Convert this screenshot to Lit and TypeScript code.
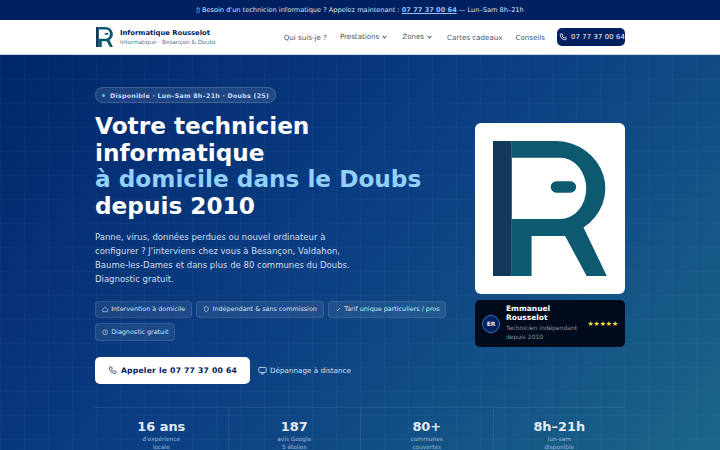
import { LitElement, html, css, svg } from "lit";
import { customElement } from "lit/decorators.js";

const phone = svg`<path d="M5 2h3l1.500 4-2 1.500a11 11 0 0 0 5 5l1.500-2 4 1.500v3a2 2 0 0 1-2 2A14 14 0 0 1 3 4a2 2 0 0 1 2-2z"/>`;
const logo = (w: number) => html`<svg width=${w} viewBox="0 0 340 404" class="logo">
  <path fill="#0d5970" fill-rule="evenodd" d="M56 0H190A150 141.500 0 0 1 270 258L340 404H280L215 283H115V404H56ZM56 50V233H200A78 91.500 0 0 0 200 50Z" />
  <rect x="172" y="120" width="76" height="34" rx="17" fill="#0d5970" />
  <rect x="0" y="0" width="56" height="404" fill="#11395a" />
</svg>`;

@customElement("app-root")
export class AppRoot extends LitElement {
  static styles = css`
    :host { display: block; height: 450px; overflow: hidden; font-family: "DejaVu Sans", sans-serif; color: #fff; }
    * { box-sizing: border-box; }
    .top { height: 20px; background: #002060; color: #dbe7f7; font-size: 6.600px; display: flex; align-items: center; justify-content: center; white-space: pre; }
    .top a { color: #93c5fd; font-weight: 700; text-decoration: underline; }
    nav { height: 35px; background: #fff; border-bottom: 1px solid #cbd5e1; display: flex; align-items: center; justify-content: space-between; padding: 0 95px 0 96px; }
    .brand { display: flex; align-items: center; gap: 7px; }
    .brand b { display: block; font-size: 6.800px; line-height: 9px; color: #002060; }
    .brand small { display: block; font-size: 5.700px; line-height: 8px; color: #4f7390; }
    .links { display: flex; align-items: center; font-size: 7.100px; color: #475569; }
    .links span { display: flex; align-items: center; gap: 3px; white-space: nowrap; }
    .links .l1 { margin-right: 13px; }
    .links .l2 { margin-right: 15px; margin-top: -1px; }
    .links .l3 { margin-right: 13px; }
    .links .l4 { margin-right: 12px; }
    .links i { display: block; width: 3px; height: 3px; border-right: 1px solid #475569; border-bottom: 1px solid #475569; transform: rotate(45deg); margin: -1px 1px 0 1px; }
    .tel { height: 18px; width: 68px; background: #002060; color: #fff; border-radius: 5px; display: flex; align-items: center; gap: 4px; padding-left: 2px; white-space: nowrap; font-size: 6.800px; letter-spacing: .15px; margin-top: -1px; }
    .tel svg { width: 8px; height: 8px; fill: none; stroke: #fff; stroke-width: 2; flex: none; }
    .hero { height: 395px; padding: 32px 95px 0; background-color: #01266c;
      background-image: linear-gradient(rgba(255,255,255,.02) 1px, transparent 1px), linear-gradient(90deg, rgba(255,255,255,.02) 1px, transparent 1px), linear-gradient(135deg, #01266c 0%, #0c4084 50%, #1b6688 100%);
      background-size: 24px 24px, 24px 24px, auto; }
    .cols { display: flex; justify-content: space-between; }
    .left { width: 355px; flex: none; }
    .pill { display: flex; width: fit-content; align-items: center; gap: 5px; height: 16px; padding: 0 6px; border-radius: 8px; background: rgba(255,255,255,.1); border: 1px solid rgba(255,255,255,.15); font-size: 6.300px; font-weight: 700; letter-spacing: .25px; color: #c4dcf5; white-space: nowrap; }
    .dot { width: 3px; height: 3px; border-radius: 50%; background: #4ecdc4; }
    h1 { margin: 10px 0 0; font-size: 23.200px; line-height: 26.700px; font-weight: 700; color: #fff; }
    h1 em { font-style: normal; color: #93d1fb; }
    .lead { margin: 10px 0 0; font-size: 8.500px; line-height: 14.200px; color: #d3deed; width: 260px; }
    .chips { display: flex; flex-wrap: wrap; gap: 5px 4.600px; margin-top: 14px; }
    .chip { height: 17.500px; display: flex; align-items: center; gap: 3px; padding: 0 5.700px; border-radius: 4px; background: rgba(255,255,255,.08); border: 1px solid rgba(255,255,255,.1); color: #d5e1ef; font-size: 6.400px; white-space: nowrap; }
    .chip svg { width: 6.500px; height: 6.500px; fill: none; stroke: #d5e1ef; stroke-width: 1.500; flex: none; }
    .cta { display: flex; align-items: center; gap: 8px; margin-top: 16px; }
    .call { width: 155px; height: 27px; background: #fff; border-radius: 5px; color: #002060; display: flex; align-items: center; justify-content: center; gap: 4px; font-size: 7.700px; font-weight: 700; letter-spacing: .2px; white-space: nowrap; }
    .call svg { width: 9px; height: 9px; fill: none; stroke: #002060; stroke-width: 1.500; }
    .remote { display: flex; align-items: center; gap: 3px; color: #cfe0f2; font-size: 7.200px; }
    .remote svg { width: 9px; height: 9px; fill: none; stroke: #cfe0f2; stroke-width: 1.500; }
    .right { width: 150px; flex: none; margin-top: 36px; }
    .logoCard { height: 171px; background: #fff; border-radius: 6px; display: flex; align-items: center; justify-content: center; }
    .logo { display: block; }
    .person { margin-top: 6px; height: 47px; background: #020b1c; border-radius: 5px; display: flex; align-items: center; padding: 0 7px; gap: 6px; }
    .er { width: 18px; height: 18px; border-radius: 50%; flex: none; background: #002060; border: 1px solid #3f6fb5; font-size: 6px; font-weight: 700; display: flex; align-items: center; justify-content: center; color: #dbeafe; }
    .who { flex: 1; min-width: 0; }
    .who b { display: block; font-size: 7.500px; line-height: 8.800px; }
    .who small { display: block; font-size: 6px; line-height: 9.500px; color: #8b95a5; }
    .stars { font-size: 6.800px; color: #fde047; white-space: nowrap; }
    .stats { display: grid; grid-template-columns: repeat(4, 1fr); margin-top: 23px; border-top: 1px solid rgba(255,255,255,.08); }
    .stat { text-align: center; padding-top: 11px; border-left: 1px solid rgba(255,255,255,.08); }
    .stat:first-child { border-left: 0; }
    .stat b { display: block; font-size: 12.900px; line-height: 15px; color: #e0eaf5; }
    .stat small { display: block; font-size: 5.800px; line-height: 8px; color: #9fb8d4; }
    .stat b + small { margin-top: 1px; }
  `;

  render() {
    const chips = [
      [svg`<path d="M2 8l6-5 6 5v6H2z"/>`, "Intervention à domicile"],
      [svg`<path d="M8 1.500l5 2v4c0 3.500-2.500 6-5 7-2.500-1-5-3.500-5-7v-4z"/>`, "Indépendant & sans commission"],
      [svg`<path d="M3 8.500l3 3 7-7"/>`, "Tarif unique particuliers / pros"],
      [svg`<circle cx="8" cy="8" r="6"/><path d="M8 4.500V8l2.500 1.500"/>`, "Diagnostic gratuit"],
    ] as const;
    const stats = [
      ["16 ans", "d'expérience", "locale"],
      ["187", "avis Google", "5 étoiles"],
      ["80+", "communes", "couvertes"],
      ["8h–21h", "lun-sam", "disponible"],
    ];
    return html`
      <div class="top">▯ Besoin d'un technicien informatique ? Appelez maintenant : <a>07 77 37 00 64</a> — Lun–Sam 8h–21h</div>
      <nav>
        <div class="brand">${logo(17)}<div><b>Informatique Rousselot</b><small>Informatique · Besançon &amp; Doubs</small></div></div>
        <div class="links">
          <span class="l1">Qui suis-je ?</span>
          <span class="l2">Prestations <i></i></span>
          <span class="l2">Zones <i></i></span>
          <span class="l3">Cartes cadeaux</span>
          <span class="l4">Conseils</span>
          <div class="tel"><svg viewBox="0 0 20 20">${phone}</svg>07 77 37 00 64</div>
        </div>
      </nav>
      <section class="hero">
        <div class="cols">
          <div class="left">
            <div class="pill"><span class="dot"></span>Disponible · Lun–Sam 8h–21h · Doubs (25)</div>
            <h1>Votre technicien<br />informatique<br /><em>à domicile dans le Doubs</em><br />depuis 2010</h1>
            <p class="lead">Panne, virus, données perdues ou nouvel ordinateur à configurer ? J'interviens chez vous à Besançon, Valdahon, Baume-les-Dames et dans plus de 80 communes du Doubs. Diagnostic gratuit.</p>
            <div class="chips">${chips.map(([i, t]) => html`<div class="chip"><svg viewBox="0 0 16 16">${i}</svg>${t}</div>`)}</div>
            <div class="cta">
              <div class="call"><svg viewBox="0 0 20 20">${phone}</svg>Appeler le 07 77 37 00 64</div>
              <div class="remote"><svg viewBox="0 0 16 16"><rect x="1.500" y="2.500" width="13" height="9" rx="1.500"/><path d="M5 14h6"/></svg>Dépannage à distance</div>
            </div>
          </div>
          <div class="right">
            <div class="logoCard">${logo(114)}</div>
            <div class="person">
              <div class="er">ER</div>
              <div class="who"><b>Emmanuel Rousselot</b><small>Technicien indépendant depuis 2010</small></div>
              <div class="stars">★★★★★</div>
            </div>
          </div>
        </div>
        <div class="stats">${stats.map(([v, a, b]) => html`<div class="stat"><b>${v}</b><small>${a}</small><small>${b}</small></div>`)}</div>
      </section>
    `;
  }
}
